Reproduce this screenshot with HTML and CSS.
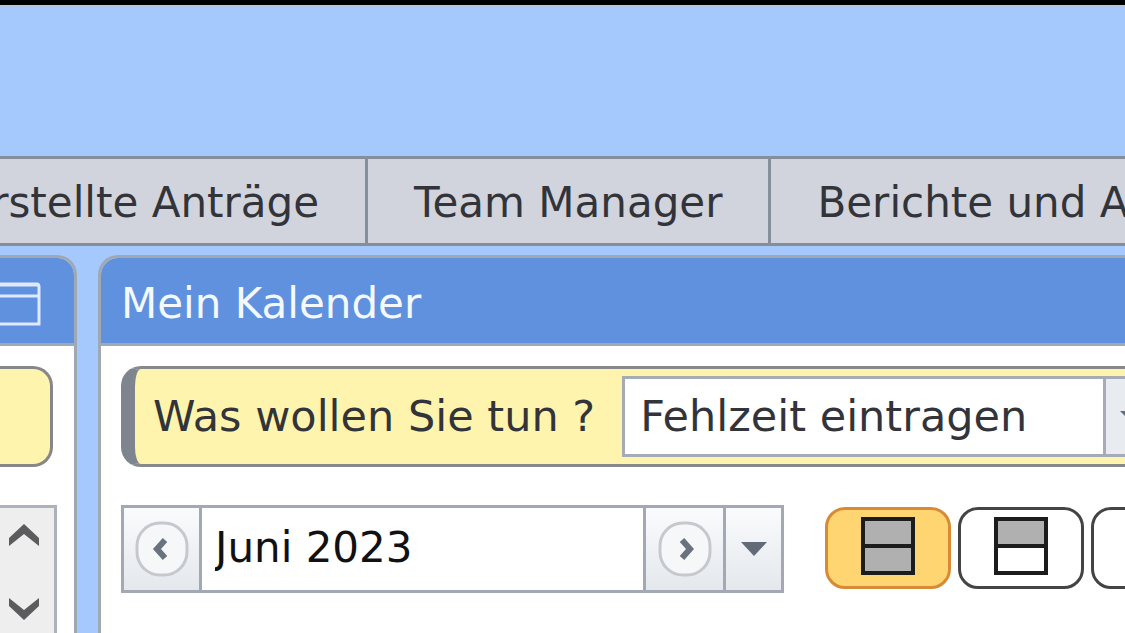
FILE: index.html
```html
<!DOCTYPE html>
<html lang="de">
<head>
<meta charset="utf-8">
<meta name="viewport" content="width=device-width, initial-scale=1">
<title>Mein Kalender</title>
<link rel="stylesheet" href="styles.css">
</head>
<body>
<div class="app">
  <header class="banner"></header>
  <nav class="tabs">
    <a class="tab tab-first" href="#antraege">Erstellte Anträge</a>
    <a class="tab" href="#team">Team Manager</a>
    <a class="tab tab-last" href="#berichte">Berichte und Auswertungen</a>
  </nav>
  <main class="panels">
    <section class="panel side" aria-label="Seitenbereich">
      <div class="panel-head side-head">
        <button class="window-button" type="button" aria-label="Fenster">
          <svg width="42" height="44" viewBox="0 0 42 44" fill="none" stroke="#dfe9ff"><path d="M-4 2H37Q39 2 39 5V42H-4" stroke-width="3"/><path d="M-4 3H38" stroke-width="3"/><path d="M-4 14H39" stroke-width="3"/></svg>
        </button>
      </div>
      <div class="side-body">
        <div class="side-note"></div>
        <div class="scroller">
          <button class="scroll-button" type="button" aria-label="Nach oben"><svg width="32" height="22" viewBox="0 0 32 22"><path d="M1 14L16 0L31 14V22L16 10L1 22Z" fill="#5c5c5e"/></svg></button>
          <button class="scroll-button" type="button" aria-label="Nach unten"><svg width="32" height="22" viewBox="0 0 32 22"><path d="M1 0L16 12L31 0V8L16 22L1 8Z" fill="#5c5c5e"/></svg></button>
        </div>
      </div>
    </section>
    <section class="panel calendar">
      <h1 class="panel-head">Mein Kalender</h1>
      <div class="calendar-body">
        <div class="task">
          <label class="task-label" for="task">Was wollen Sie tun ?</label>
          <div class="combo">
            <select id="task" class="combo-select"><option>Fehlzeit eintragen</option></select>
            <span class="combo-arrow"><svg width="22" height="14" viewBox="0 0 22 14"><path d="M14 1H40L27 14Z" fill="#616a76"/></svg></span>
          </div>
        </div>
        <div class="toolbar">
          <div class="month">
            <button class="month-button" type="button" aria-label="Vorheriger Monat">
              <svg width="54" height="56" viewBox="0 0 54 56" fill="none"><rect x="2" y="2" width="50" height="52" rx="23" fill="#f6f7f9" stroke="#c5c9ce" stroke-width="3"/><path d="M30 19L22 28L30 37" stroke="#69727d" stroke-width="6"/></svg>
            </button>
            <input class="month-input" type="text" value="Juni 2023" aria-label="Monat">
            <button class="month-button" type="button" aria-label="Nächster Monat">
              <svg width="54" height="56" viewBox="0 0 54 56" fill="none"><rect x="2" y="2" width="50" height="52" rx="23" fill="#f6f7f9" stroke="#c5c9ce" stroke-width="3"/><path d="M24 19L32 28L24 37" stroke="#69727d" stroke-width="6"/></svg>
            </button>
            <button class="month-button month-drop" type="button" aria-label="Monat wählen">
              <svg width="28" height="16" viewBox="0 0 28 16"><path d="M1 1H27L14 15Z" fill="#626b77"/></svg>
            </button>
          </div>
          <div class="views">
            <button class="view view-active" type="button" aria-label="Ganzer Tag">
              <svg width="54" height="58" viewBox="0 0 54 58"><path d="M2 2H52V56H2Z" fill="#b0b0b0" stroke="#1c1c1c" stroke-width="4"/><path d="M2 29H52" stroke="#1c1c1c" stroke-width="4"/></svg>
            </button>
            <button class="view" type="button" aria-label="Erste Tageshälfte">
              <svg width="54" height="58" viewBox="0 0 54 58"><path d="M2 2H52V56H2Z" fill="#fff"/><path d="M2 2H52V29H2Z" fill="#b0b0b0"/><path d="M2 2H52V56H2Z M2 29H52" fill="none" stroke="#1c1c1c" stroke-width="4"/></svg>
            </button>
            <button class="view" type="button" aria-label="Zweite Tageshälfte"></button>
          </div>
        </div>
      </div>
    </section>
  </main>
</div>
</body>
</html>
```
FILE: styles.css
```css
* {
  box-sizing: border-box;
}

body {
  margin: 0;
  font-family: "DejaVu Sans", Verdana, sans-serif;
  font-size: 42px;
  line-height: 48px;
  color: #33343a;
  background: #a5c8fd;
}

button,
input,
select {
  margin: 0;
  padding: 0;
  border: 0;
  font: inherit;
  color: inherit;
  background: none;
}

svg {
  display: block;
  flex: none;
}

.app {
  display: flex;
  flex-direction: column;
  height: 100vh;
  overflow: hidden;
}

.banner {
  flex: none;
  height: 156px;
  border-top: 5px solid #000;
  background: linear-gradient(#b5c6d8, #a5c8fd 4px);
}

.tabs {
  display: flex;
  flex: none;
  border-top: 3px solid #858e9b;
  border-bottom: 3px solid #858e9b;
  background: #d1d4dc;
}

.tab {
  flex: none;
  padding: 20px 46px 16px;
  border-right: 3px solid #858e9b;
  color: inherit;
  text-decoration: none;
  white-space: nowrap;
}

.tab-first {
  display: flex;
  justify-content: flex-end;
  width: 368px;
}

.tab-last {
  flex: 1;
  border-right: 0;
}

.panels {
  display: flex;
  flex: 1;
  gap: 21px;
  min-height: 0;
  padding-top: 9px;
}

.panel {
  display: flex;
  flex-direction: column;
  overflow: hidden;
  border: 3px solid #a0a8b3;
  border-bottom: 0;
  background: #fff;
}

.side {
  flex: none;
  width: 77px;
  border-left: 0;
  border-top-right-radius: 20px;
}

.calendar {
  flex: 1;
  min-width: 0;
  border-right: 0;
  border-top-left-radius: 20px;
}

.panel-head {
  flex: none;
  height: 88px;
  margin: 0;
  padding: 22px 20px 0;
  border-bottom: 3px solid #a0a8b3;
  font-size: 42px;
  font-weight: 400;
  color: #f4f8ff;
  background: #5f91de;
}

.side-head {
  padding: 24px 0 0;
}

.side-body {
  display: flex;
  flex: 1;
  flex-direction: column;
  gap: 38px;
  padding: 20px 19px 0 0;
}

.side-note {
  flex: none;
  width: 53px;
  height: 101px;
  border: 3px solid #868788;
  border-left: 0;
  border-radius: 0 20px 20px 0;
  background: #fff4ad;
}

.scroller {
  display: flex;
  flex: 1;
  flex-direction: column;
  gap: 52px;
  width: 57px;
  padding: 16px 0 0 8px;
  border: 3px solid #adb1bb;
  border-left: 0;
  border-bottom: 0;
  background: #eee;
}

.calendar-body {
  display: flex;
  flex-direction: column;
  gap: 38px;
  padding: 20px 0 0 20px;
}

.task {
  display: flex;
  align-items: center;
  gap: 27px;
  height: 101px;
  padding-left: 18px;
  border: 3px solid #868a8c;
  border-left: 14px solid #7f858f;
  border-right: 0;
  border-radius: 20px 0 0 20px;
  font-size: 43px;
  background: #fff4ad;
}

.task-label {
  flex: none;
  padding-bottom: 2px;
}

.combo {
  display: flex;
  flex: 1;
  min-width: 0;
  height: 81px;
  border: 3px solid #a5abb7;
  border-right: 0;
  background: #fff;
}

.combo-select {
  flex: 1;
  min-width: 0;
  padding: 0 0 2px 15px;
  appearance: none;
}

.combo-arrow {
  display: flex;
  flex: none;
  align-items: center;
  width: 22px;
  border-left: 3px solid #a5abb7;
  background: #e8ebf0;
}

.toolbar {
  display: flex;
  gap: 41px;
}

.month {
  display: flex;
  flex: none;
  width: 663px;
  height: 88px;
  border: 3px solid #a3a8b5;
  background: #fff;
}

.month-input {
  flex: 1;
  min-width: 0;
  padding: 0 0 2px 13px;
  color: #111;
}

.month-button {
  display: flex;
  flex: none;
  align-items: center;
  justify-content: center;
  width: 80px;
  border-left: 3px solid #a3a8b5;
  background: linear-gradient(#fafbfd, #e4e8ec);
}

.month-button:first-child {
  width: 78px;
  border-left: 0;
  border-right: 3px solid #a3a8b5;
}

.month-drop {
  width: 58px;
}

.views {
  display: flex;
  flex: none;
  gap: 7px;
  padding-top: 2px;
}

.view {
  display: flex;
  flex: none;
  justify-content: center;
  width: 126px;
  height: 82px;
  padding-top: 7px;
  border: 3px solid #444;
  border-radius: 20px;
  background: #fff;
}

.view-active {
  border-color: #d98a35;
  background: #ffd571;
}
```
